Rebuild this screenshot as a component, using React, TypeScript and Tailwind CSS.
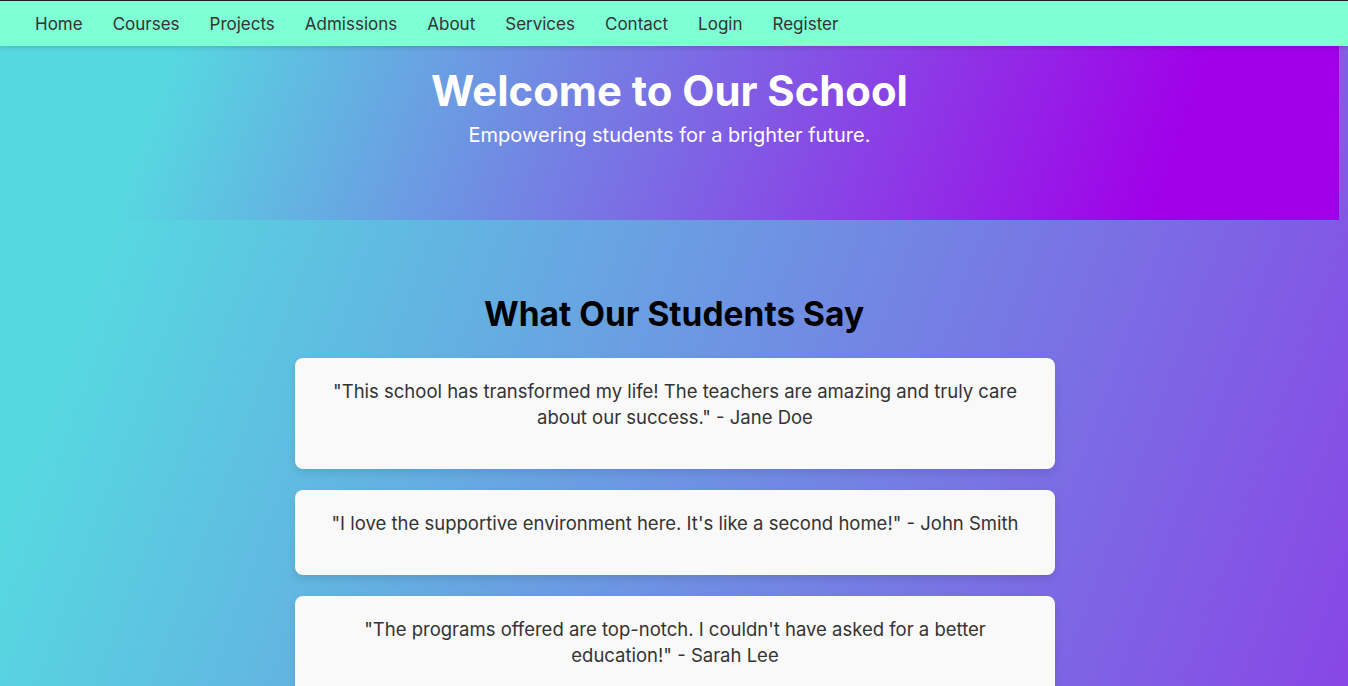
import React from "react";

const navItems = ["Home", "Courses", "Projects", "Admissions", "About", "Services", "Contact", "Login", "Register"];

const testimonials = [
  "\"This school has transformed my life! The teachers are amazing and truly care about our success.\" - Jane Doe",
  "\"I love the supportive environment here. It's like a second home!\" - John Smith",
  "\"The programs offered are top-notch. I couldn't have asked for a better education!\" - Sarah Lee",
];

export default function App() {
  return (
    <div className="min-h-screen bg-[linear-gradient(110deg,#56d8e0_184px,#a000e8_2141px)] font-['Inter',sans-serif] pb-[80px]">
      <nav className="relative z-10 h-[46px] border-t border-[#1e1e1e] bg-[#7fffd4] shadow-[0_2px_4px_rgba(0,0,0,0.12)] flex items-center pl-[35px] pt-[2px] gap-[30px] text-[17px] text-[#333]">
        {navItems.map((n) => (
          <a key={n} href="#" className="leading-none">
            {n}
          </a>
        ))}
      </nav>

      <header className="w-[1339px] h-[174px] bg-[linear-gradient(110deg,#56d8e0_12.4%,#a000e8_86.6%)] text-center text-white pt-[21px]">
        <h1 className="text-[41.8px] font-bold leading-[48px]">Welcome to Our School</h1>
        <p className="text-[20px] leading-[30px] mt-[5px]">Empowering students for a brighter future.</p>
      </header>

      <section className="pt-[70px] text-center">
        <h2 className="text-[33.5px] font-bold leading-[48px] text-black mb-[20px]">What Our Students Say</h2>
        <div className="pl-[2px]">
          <div className="w-[760px] mx-auto flex flex-col gap-[21px]">
            {testimonials.map((t, i) => (
              <div key={i} className="bg-[#f9f9f9] rounded-[8px] shadow-[0_4px_8px_rgba(0,0,0,0.1)] px-[20px] pt-[20px] pb-[39px]">
                <p className="text-[18.5px] leading-[26px] text-[#333]">{t}</p>
              </div>
            ))}
          </div>
        </div>
      </section>
    </div>
  );
}
